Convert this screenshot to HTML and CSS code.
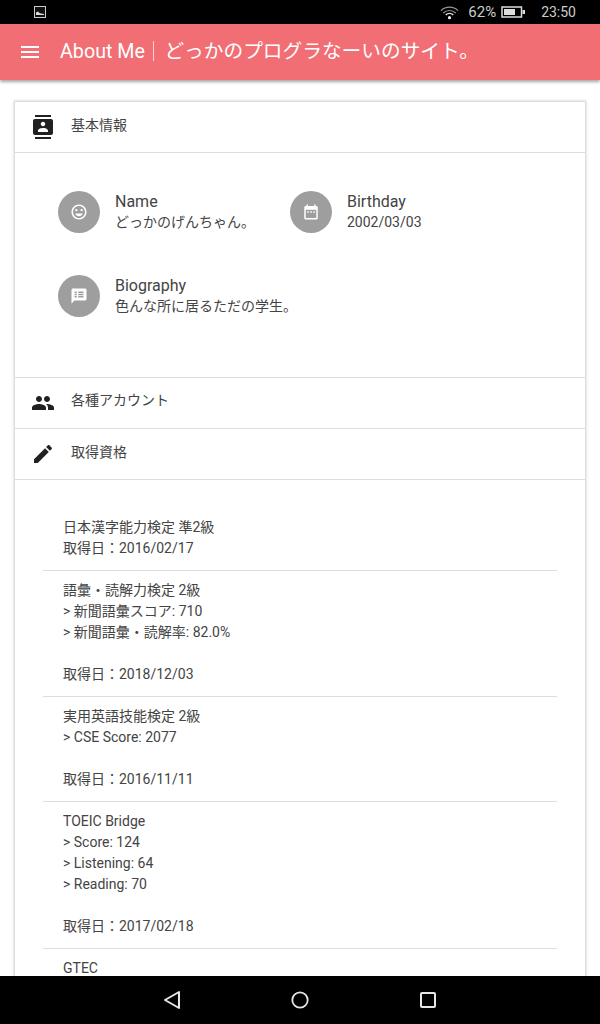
FILE: index.html
```html
<!doctype html>
<html lang="ja">
<head>
  <meta charset="UTF-8">
  <title>About Me</title>
  <link rel="stylesheet" href="styles.css">
</head>
<body>
  <div class="screen">
    <div class="status">
      <svg class="status-pic" width="12" height="12" viewBox="0 0 12 12"><rect x=".5" y=".5" width="11" height="11" fill="#111" stroke="#ccc"/><path d="M2 9V6.500l2-1 1.500 1.500 1.500.5 3 .5V9z" fill="#ddd"/></svg>
      <div class="status-right">
        <svg width="19" height="16" viewBox="0 0 20 16"><path d="M1 6.500a13 13 0 0 1 18 0M3.500 9a9.500 9.500 0 0 1 13 0" fill="none" stroke="#999" stroke-width="1.300"/><path d="M6 11a6 6 0 0 1 8 0" fill="none" stroke="#ddd" stroke-width="1.500"/><circle cx="10" cy="14" r="1.700" fill="#eee"/></svg>
        <span class="pct">62%</span>
        <svg class="batt" width="24" height="12" viewBox="0 0 24 12"><rect x="1" y="1" width="19.500" height="10" fill="none" stroke="#ddd" stroke-width="1.500"/><rect x="3" y="3" width="11" height="6" fill="#ddd"/><rect x="21.500" y="4" width="2.500" height="4" fill="#ddd"/></svg>
        <span class="time">23:50</span>
      </div>
    </div>

    <header class="appbar">
      <svg class="menu" width="18" height="12" viewBox="0 0 18 12"><path d="M0 0h18v2H0zM0 5h18v2H0zM0 10h18v2H0z" fill="#fff"/></svg>
      <h1 class="title">About Me<span class="bar"></span><span class="subtitle">どっかのプログラなーいのサイト。</span></h1>
    </header>

    <main class="content">
      <div class="card">
        <div class="row">
          <svg class="row-icon" width="24" height="24" viewBox="0 0 24 24"><path d="M20 0H4v2h16V0zM4 24h16v-2H4v2zM20 4H4c-1.100 0-2 .9-2 2v12c0 1.100.9 2 2 2h16c1.100 0 2-.9 2-2V6c0-1.100-.9-2-2-2zm-8 2.750c1.240 0 2.250 1.010 2.250 2.250s-1.010 2.250-2.250 2.250S9.750 10.240 9.750 9 10.760 6.750 12 6.750zM17 17H7v-1.500c0-1.670 3.330-2.500 5-2.500s5 .83 5 2.500V17z"/></svg>
          <span class="row-label">基本情報</span>
        </div>

        <div class="profile">
          <div class="profile-item">
            <div class="avatar"><svg width="18" height="18" viewBox="0 0 24 24"><path d="M11.990 2C6.470 2 2 6.480 2 12s4.470 10 9.990 10C17.520 22 22 17.520 22 12S17.520 2 11.990 2zM12 20c-4.420 0-8-3.580-8-8s3.580-8 8-8 8 3.580 8 8-3.580 8-8 8z"/><circle cx="15.500" cy="9.500" r="1.500"/><circle cx="8.500" cy="9.500" r="1.500"/><path d="M12 17.500c2.330 0 4.310-1.460 5.110-3.500H6.890c.8 2.040 2.780 3.500 5.110 3.500z"/></svg></div>
            <div>
              <div class="profile-head">Name</div>
              <div class="profile-text">どっかのげんちゃん。</div>
            </div>
          </div>
          <div class="profile-item">
            <div class="avatar"><svg width="18" height="18" viewBox="0 0 24 24"><path d="M9 11H7v2h2v-2zm4 0h-2v2h2v-2zm4 0h-2v2h2v-2zm2-7h-1V2h-2v2H8V2H6v2H5c-1.110 0-1.990.9-1.990 2L3 20c0 1.100.89 2 2 2h14c1.100 0 2-.9 2-2V6c0-1.100-.9-2-2-2zm0 16H5V9h14v11z"/></svg></div>
            <div>
              <div class="profile-head">Birthday</div>
              <div class="profile-text">2002/03/03</div>
            </div>
          </div>
          <div class="profile-item wide">
            <div class="avatar"><svg width="18" height="18" viewBox="0 0 24 24"><path d="M20 2H4c-1.100 0-1.990.9-1.990 2L2 22l4-4h14c1.100 0 2-.9 2-2V4c0-1.100-.9-2-2-2zM9 14H6v-2h3v2zm0-3H6V9h3v2zm0-3H6V6h3v2zm9 6h-7v-2h7v2zm0-3h-7V9h7v2zm0-3h-7V6h7v2z"/></svg></div>
            <div>
              <div class="profile-head">Biography</div>
              <div class="profile-text">色んな所に居るただの学生。</div>
            </div>
          </div>
        </div>

        <div class="row line-top">
          <svg class="row-icon" width="24" height="24" viewBox="0 0 24 24"><path d="M16 11c1.660 0 2.990-1.340 2.990-3S17.660 5 16 5s-3 1.340-3 3 1.340 3 3 3zm-8 0c1.660 0 2.990-1.340 2.990-3S9.660 5 8 5 5 6.340 5 8s1.340 3 3 3zm0 2c-2.330 0-7 1.170-7 3.500V19h14v-2.500c0-2.330-4.670-3.500-7-3.500zm8 0c-.29 0-.62.02-.97.05 1.160.84 1.970 1.970 1.970 3.450V19h6v-2.500c0-2.330-4.670-3.500-7-3.500z"/></svg>
          <span class="row-label">各種アカウント</span>
        </div>
        <div class="row">
          <svg class="row-icon" width="24" height="24" viewBox="0 0 24 24"><path d="M3 17.250V21h3.750L17.810 9.940l-3.750-3.750L3 17.250zM20.710 7.040c.39-.39.39-1.020 0-1.410l-2.340-2.340c-.39-.39-1.020-.39-1.410 0l-1.830 1.830 3.750 3.750 1.830-1.830z"/></svg>
          <span class="row-label">取得資格</span>
        </div>

        <ul class="quals">
          <li>日本漢字能力検定 準2級<br>取得日：2016/02/17</li>
          <li>語彙・読解力検定 2級<br>&gt; 新聞語彙スコア: 710<br>&gt; 新聞語彙・読解率: 82.0%<br><br>取得日：2018/12/03</li>
          <li>実用英語技能検定 2級<br>&gt; CSE Score: 2077<br><br>取得日：2016/11/11</li>
          <li>TOEIC Bridge<br>&gt; Score: 124<br>&gt; Listening: 64<br>&gt; Reading: 70<br><br>取得日：2017/02/18</li>
          <li>GTEC</li>
        </ul>
      </div>
    </main>

    <nav class="navbar">
      <svg width="18" height="20" viewBox="0 0 18 20"><path d="M16 2v16L2 10z" fill="none" stroke="#e6e6e6" stroke-width="2" stroke-linejoin="round"/></svg>
      <svg width="18" height="18" viewBox="0 0 18 18"><circle cx="9" cy="9" r="7.700" fill="none" stroke="#e6e6e6" stroke-width="1.800"/></svg>
      <svg width="18" height="18" viewBox="0 0 18 18"><rect x="2" y="2" width="14" height="14" rx="1" fill="none" stroke="#e6e6e6" stroke-width="2"/></svg>
    </nav>
  </div>
</body>
</html>
```

FILE: styles.css
```css
* { margin: 0; padding: 0; box-sizing: border-box; list-style: none; }
body { background: #fff; color: #333; font-family: Roboto, "Noto Sans CJK JP", sans-serif; }
.screen { width: 600px; height: 1024px; display: flex; flex-direction: column; overflow: hidden; }

.status { height: 24px; flex: none; background: #000; color: #ccc; display: flex; align-items: center; justify-content: space-between; padding: 0 24px 0 34px; font-size: 14px; }
.status-right { display: flex; align-items: center; }
.pct { margin-left: 9px; font-size: 15px; }
.batt { margin-left: 5px; }
.time { margin-left: 16px; }

.appbar { height: 56px; flex: none; background: #f06e74; color: #fff; display: flex; align-items: center; padding-left: 21px; box-shadow: 0 2px 3px rgba(0,0,0,.35); position: relative; z-index: 1; }
.title { font-size: 19.7px; font-weight: 400; margin-left: 21px; padding-bottom: 2px; white-space: nowrap; display: flex; align-items: center; }
.subtitle { padding-bottom: 3px; }
.bar { width: 1.500px; height: 20px; background: rgba(255,255,255,.7); margin: 0 10px 0 8px; }

.content { flex: 1; min-height: 0; overflow: hidden; padding: 21px 14px 0; }
.card { background: #fff; border: 1px solid #ddd; box-shadow: 0 0 3px rgba(0,0,0,.2); }

.row { height: 51px; display: flex; align-items: center; padding-left: 16px; border-bottom: 1px solid #ddd; }
.row.line-top { border-top: 1px solid #ddd; height: 52px; }
.row-icon { fill: #212121; flex: none; }
.row-label { font-size: 14px; margin-left: 16px; color: #444; padding-bottom: 7px; }
.line-top .row-label { padding-bottom: 9px; }

.profile { display: flex; flex-wrap: wrap; padding: 38px 0 42px 43px; }
.profile-item { width: 232px; height: 42px; display: flex; align-items: center; margin-bottom: 42px; }
.profile-item.wide { width: 100%; margin-bottom: 18px; }
.avatar { width: 42px; height: 42px; border-radius: 50%; background: #9e9e9e; flex: none; display: flex; align-items: center; justify-content: center; margin-right: 15px; }
.avatar svg { fill: #fff; }
.profile-head { font-size: 16px; line-height: 21px; color: #444; }
.profile-text { font-size: 14px; line-height: 21px; color: #444; }

.quals { padding: 37px 28px 0; font-size: 14px; line-height: 21px; color: #444; }
.quals li { padding: 0 20px 11px; margin-bottom: 9px; border-bottom: 1px solid #ddd; }
.quals li:last-child { border-bottom: 0; }

.navbar { height: 48px; flex: none; background: #000; display: flex; align-items: center; position: relative; z-index: 1; padding-left: 163px; gap: 110px; }
```
